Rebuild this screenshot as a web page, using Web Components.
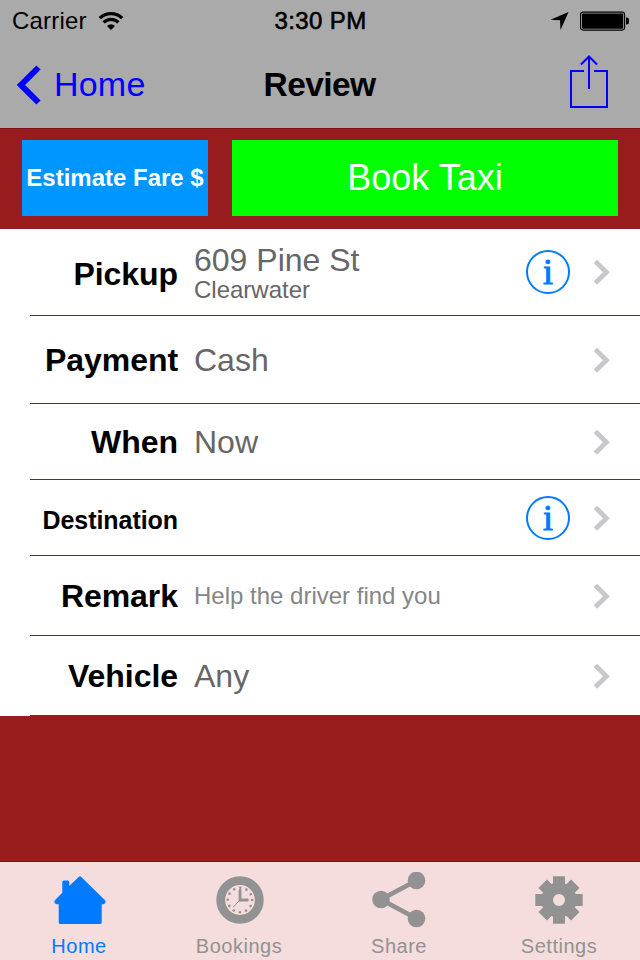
<!DOCTYPE html>
<html lang="en">
<head>
<meta charset="utf-8">
<title>Review</title>
<style>
    html, body {
        margin: 0;
        height: 100%;
    }

    body {
        --main-bg-color: #981b1e;
        --bar-color: #aaaaaa;
        --link-color: #0000ff;
        --tint-color: #007aff;
        font-family: "Liberation Sans", Arial, sans-serif;
        background: var(--main-bg-color);
        overflow: hidden;
    }
</style>
</head>
<body>
<taxi-app></taxi-app>

<script>
class StatusBar extends HTMLElement {
    constructor() {
        super();
        this._root = this.attachShadow({ mode: 'open' });
        this._root.innerHTML = `
            <style>
            :host {
                display: grid;
                grid-template-columns: 1fr auto 1fr;
                align-items: center;
                height: 40px;
                padding: 0 11px 0 12px;
                font-size: 24px;
                line-height: 41px;
                background: var(--bar-color);
                color: #000;
            }

            .left, .right {
                display: flex;
                align-items: center;
            }

            .left {
                gap: 11px;
                letter-spacing: 0.2px;
            }

            .right {
                justify-content: flex-end;
                gap: 11px;
            }

            .time {
                letter-spacing: 0.4px;
                -webkit-text-stroke: 0.6px #000;
            }

            svg {
                display: block;
            }
            </style>
            <div class="left">
                <span><slot name="carrier"></slot></span>
                <svg width="26" height="20" viewBox="0 0 26 20" fill="none" stroke="#000" stroke-width="3.2">
                    <path d="M1.8 7.2 A16 16 0 0 1 24.2 7.2"/>
                    <path d="M5.6 11.4 A10.5 10.5 0 0 1 20.4 11.4"/>
                    <path d="M13 19 L9 15 A5.6 5.6 0 0 1 17 15 Z" fill="#000" stroke="none"/>
                </svg>
            </div>
            <span class="time"><slot name="time"></slot></span>
            <div class="right">
                <svg width="19" height="19" viewBox="0 0 19 19">
                    <path d="M18.5 1 L0.5 8.8 L10 9.2 L10.5 19 Z"/>
                </svg>
                <svg width="49" height="20" viewBox="0 0 49 20">
                    <rect x="0.6" y="1.1" width="44" height="18" rx="2.5" fill="none" stroke="#000" stroke-width="1.1"/>
                    <rect x="2" y="2.5" width="41.2" height="15.2" rx="1"/>
                    <path d="M46 6.5 h0.5 a2.5 2.5 0 0 1 2.5 2.5 v2 a2.5 2.5 0 0 1 -2.5 2.5 h-0.5 z"/>
                </svg>
            </div>
        `;
    }
}

class NavBar extends HTMLElement {
    constructor() {
        super();
        this._root = this.attachShadow({ mode: 'open' });
        this._root.innerHTML = `
            <style>
            :host {
                display: grid;
                grid-template-columns: 1fr auto 1fr;
                align-items: center;
                height: 88px;
                padding: 0 31px 0 16px;
                border-bottom: 1px solid #7b1217;
                font-size: 34px;
                line-height: 89px;
                background: var(--bar-color);
            }

            .back {
                display: flex;
                align-items: center;
                gap: 12px;
                letter-spacing: 0.2px;
                color: var(--link-color);
            }

            .title {
                color: #000;
                padding-left: 14px;
                font-size: 33.5px;
                font-weight: bold;
                letter-spacing: -0.6px;
            }

            .action {
                justify-self: end;
                margin-bottom: 6px;
            }

            svg {
                display: block;
            }
            </style>
            <div class="back">
                <svg width="26" height="42" viewBox="0 0 26 42" fill="none" stroke="#00f" stroke-width="6">
                    <path d="M22.5 3.5 L5 21 L22.5 38.5"/>
                </svg>
                <span><slot name="back"></slot></span>
            </div>
            <span class="title"><slot></slot></span>
            <svg class="action" width="40" height="56" viewBox="0 0 40 56" fill="none" stroke="#00f" stroke-width="2">
                <path d="M15 17 H2 V53 H38 V17 H25"/>
                <path d="M20 35 V3 M12 10.5 L20 2.5 L28 10.5"/>
            </svg>
        `;
    }
}

class ActionButton extends HTMLElement {
    constructor() {
        super();
        this._root = this.attachShadow({ mode: 'open' });
        this._root.innerHTML = `
            <style>
            :host {
                display: flex;
                align-items: center;
                justify-content: center;
                height: 76px;
                color: #fff;
                white-space: nowrap;
            }

            :host([kind="fare"]) {
                flex: 0 0 186px;
                background: #0096ff;
                font-size: 24px;
                font-weight: bold;
            }

            :host([kind="book"]) {
                flex: 1;
                background: #00ff00;
                font-size: 36px;
            }
            </style>
            <slot></slot>
        `;
    }
}

class InfoButton extends HTMLElement {
    constructor() {
        super();
        this._root = this.attachShadow({ mode: 'open' });
        this._root.innerHTML = `
            <style>
            :host {
                display: flex;
                justify-content: center;
                box-sizing: border-box;
                width: 44px;
                height: 44px;
                border: 2px solid var(--tint-color);
                border-radius: 50%;
                color: var(--tint-color);
                font: 36px/40px "Liberation Serif", serif;
                -webkit-text-stroke: 1px var(--tint-color);
            }
            </style>
            <span>i</span>
        `;
    }
}

class BookingRow extends HTMLElement {
    constructor() {
        super();
        this._root = this.attachShadow({ mode: 'open' });
        this._root.innerHTML = `
            <style>
            :host {
                display: flex;
                box-sizing: border-box;
                height: var(--row-height, 80px);
                padding-left: 30px;
                background: #fff;
            }

            .row {
                flex: 1;
                display: flex;
                align-items: center;
                padding-right: 30px;
                border-bottom: 1px solid #762329;
            }

            :host(:last-of-type) .row {
                border-color: var(--main-bg-color);
            }

            .label {
                width: 148px;
                text-align: right;
                font-size: var(--label-size, 32px);
                font-weight: bold;
                letter-spacing: -0.05px;
                color: #000;
                padding-top: var(--label-shift, 2px);
            }

            .value {
                flex: 1;
                margin-left: 16px;
                padding-top: var(--value-shift, 0);
                font-size: 32px;
                line-height: 34px;
                color: #666;
            }

            ::slotted(small) {
                display: block;
                font-size: 24px;
                line-height: 26px;
            }

            ::slotted(small.hint) {
                color: #858585;
            }

            .chevron {
                display: block;
                margin-left: 23px;
            }
            </style>
            <div class="row">
                <div class="label"></div>
                <div class="value"><slot></slot></div>
                <slot name="info"></slot>
                <svg class="chevron" width="17" height="26" viewBox="0 0 17 26" fill="none" stroke="#c7c7cc" stroke-width="4.8">
                    <path d="M2.4 2.4 L13.4 13.2 L2.4 24"/>
                </svg>
            </div>
        `;
        this._root.querySelector('.label').textContent = this.getAttribute('label');
    }
}

const tabIcons = {
    home: `
        <path fill="currentColor" stroke="currentColor" stroke-width="3" stroke-linejoin="round"
            d="M28 5.8 L52 29.2 Q52.5 30.5 51 30.8 H48.2 V50.5 H8.2 V30.8 H5 Q3.5 30.5 4 29.2 L11.8 21.2 V10 H15.8 V17.4 Z"/>`,
    bookings: `
        <circle cx="28" cy="28" r="19.3" fill="none" stroke="currentColor" stroke-width="8.8"/>
        <circle cx="28" cy="28" r="12.2" fill="none" stroke="currentColor" stroke-width="2.6"
            stroke-linecap="round" stroke-dasharray="0 6.388"/>
        <path d="M28 18.5 V28 H35.5" fill="none" stroke="currentColor" stroke-width="2.8" stroke-linecap="round"/>
        <path d="M28 28 L21.3 35" stroke="currentColor" stroke-width="1"/>`,
    share: `
        <path d="M44.5 8.5 L9 27.5 L44.5 46.5" fill="none" stroke="currentColor" stroke-width="4.8"/>
        <g fill="currentColor">
            <circle cx="9" cy="27.5" r="8.8"/>
            <circle cx="44.5" cy="8.5" r="8.8"/>
            <circle cx="44.5" cy="46.5" r="8.8"/>
        </g>`,
    settings: `
        <circle cx="27" cy="28" r="11.8" fill="none" stroke="currentColor" stroke-width="11.6"/>
        <g stroke="currentColor" stroke-width="12">
            <path d="M27 4.3 V20 M27 36 V51.7 M3.3 28 H19 M35 28 H50.7"/>
            <path d="M10.7 11.7 L21 22 M33 34 L43.3 44.3 M43.3 11.7 L33 22 M21 34 L10.7 44.3"/>
        </g>`
};

class TabItem extends HTMLElement {
    constructor() {
        super();
        this._root = this.attachShadow({ mode: 'open' });
        this._root.innerHTML = `
            <style>
            :host {
                flex: 1;
                display: flex;
                flex-direction: column;
                align-items: center;
                gap: 6px;
                padding-top: 10px;
                color: #929292;
                font-size: 20px;
                line-height: 24px;
                letter-spacing: 0.5px;
            }

            :host([active]) {
                color: var(--tint-color);
            }

            svg {
                display: block;
            }

            span {
                padding-right: 2px;
            }
            </style>
            <svg width="56" height="56" viewBox="0 0 56 56">${tabIcons[this.getAttribute('icon')]}</svg>
            <span><slot></slot></span>
        `;
    }
}

class TabBar extends HTMLElement {
    constructor() {
        super();
        this._root = this.attachShadow({ mode: 'open' });
        this._root.innerHTML = `
            <style>
            :host {
                display: flex;
                height: 98px;
                border-top: 1px solid #7b1217;
                background: #f5dddd;
            }
            </style>
            <slot></slot>
        `;
    }
}

class TaxiApp extends HTMLElement {
    constructor() {
        super();
        this._root = this.attachShadow({ mode: 'open' });
        this._root.innerHTML = `
            <style>
            :host {
                display: flex;
                flex-direction: column;
                width: 640px;
                height: 960px;
                background: var(--main-bg-color);
            }

            .actions {
                display: flex;
                gap: 24px;
                padding: 11px 22px 13px;
            }

            .rows {
                flex: 1;
            }

            .pickup {
                --row-height: 87px;
                --label-shift: 4px;
                --value-shift: 2px;
            }

            .payment {
                --row-height: 88px;
                --label-shift: 1px;
            }

            .when {
                --row-height: 76px;
            }

            .destination {
                --row-height: 76px;
                --label-size: 25px;
                --label-shift: 5px;
            }
            </style>
            <status-bar>
                <span slot="carrier">Carrier</span>
                <span slot="time">3:30 PM</span>
            </status-bar>
            <nav-bar><span slot="back">Home</span>Review</nav-bar>
            <div class="actions">
                <action-button kind="fare">Estimate Fare $</action-button>
                <action-button kind="book">Book Taxi</action-button>
            </div>
            <div class="rows">
                <booking-row class="pickup" label="Pickup">609 Pine St<small>Clearwater</small><info-button slot="info"></info-button></booking-row>
                <booking-row class="payment" label="Payment">Cash</booking-row>
                <booking-row class="when" label="When">Now</booking-row>
                <booking-row class="destination" label="Destination"><info-button slot="info"></info-button></booking-row>
                <booking-row label="Remark"><small class="hint">Help the driver find you</small></booking-row>
                <booking-row label="Vehicle">Any</booking-row>
            </div>
            <tab-bar>
                <tab-item icon="home" active>Home</tab-item>
                <tab-item icon="bookings">Bookings</tab-item>
                <tab-item icon="share">Share</tab-item>
                <tab-item icon="settings">Settings</tab-item>
            </tab-bar>
        `;
    }
}

window.customElements.define('status-bar', StatusBar);
window.customElements.define('nav-bar', NavBar);
window.customElements.define('action-button', ActionButton);
window.customElements.define('info-button', InfoButton);
window.customElements.define('booking-row', BookingRow);
window.customElements.define('tab-item', TabItem);
window.customElements.define('tab-bar', TabBar);
window.customElements.define('taxi-app', TaxiApp);
</script>
</body>
</html>
